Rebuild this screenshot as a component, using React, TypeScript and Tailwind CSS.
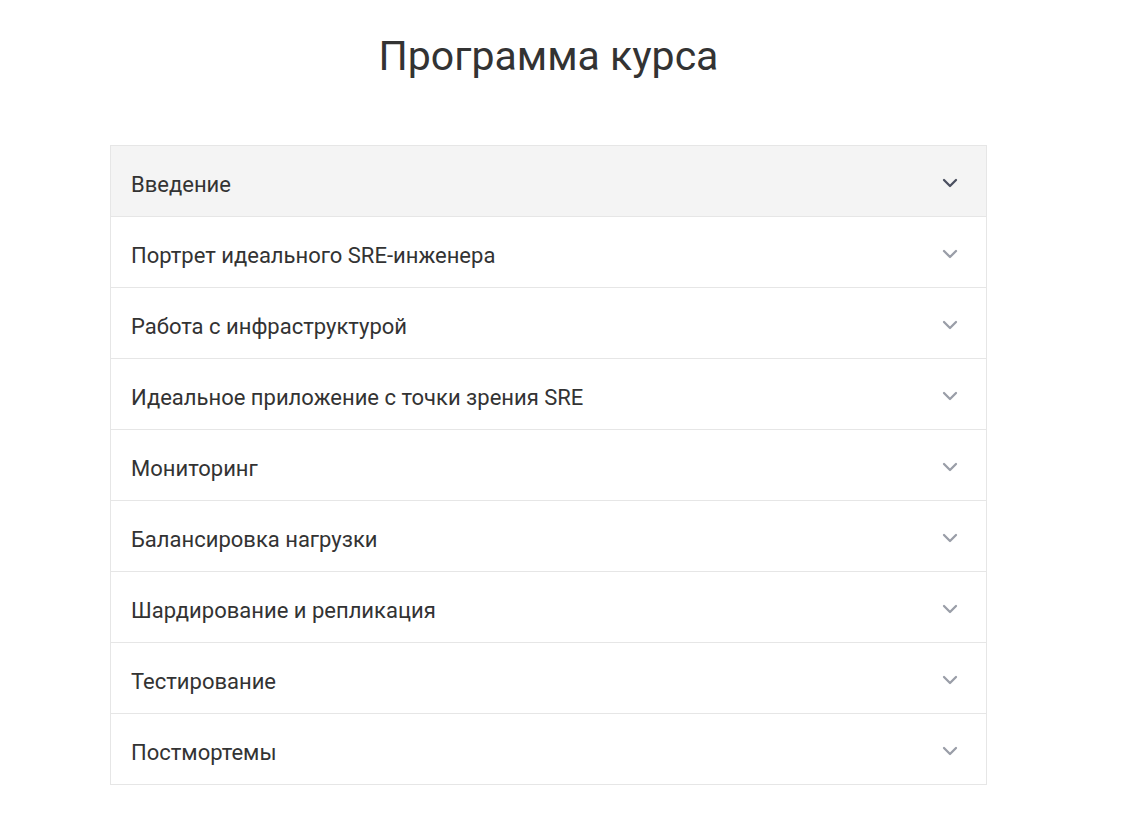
import { ChevronDown } from 'lucide-react';

const items = [
  'Введение',
  'Портрет идеального SRE-инженера',
  'Работа с инфраструктурой',
  'Идеальное приложение с точки зрения SRE',
  'Мониторинг',
  'Балансировка нагрузки',
  'Шардирование и репликация',
  'Тестирование',
  'Постмортемы',
];

const App = () => {
  return (
    <div className="min-h-screen bg-white font-['Roboto',sans-serif] text-[#333333]">
      <div className="ml-[110px] w-[877px] pt-[28px]">
        <h2 className="text-center text-[41px] font-normal leading-[56px] tracking-[0px]">
          Программа курса
        </h2>

        {/* Course sections */}
        <div className="mt-[61px] border border-[#e6e6e6]">
          {items.map((item, i) => (
            <div
              key={item}
              className={`flex h-[70px] items-center justify-between pl-[20px] pr-[24px] ${
                i > 0 ? 'box-content border-t border-[#e6e6e6]' : ''
              } ${i === 0 ? 'bg-[#f4f4f4]' : 'bg-white'}`}
            >
              <span className="pt-[7px] text-[22px] leading-none">{item}</span>
              <ChevronDown
                size={24}
                strokeWidth={2.3}
                className={`mt-[3px] ${i === 0 ? 'text-[#4b5060]' : 'text-[#9a9ea8]'}`}
              />
            </div>
          ))}
        </div>
      </div>
    </div>
  );
};

export default App;
